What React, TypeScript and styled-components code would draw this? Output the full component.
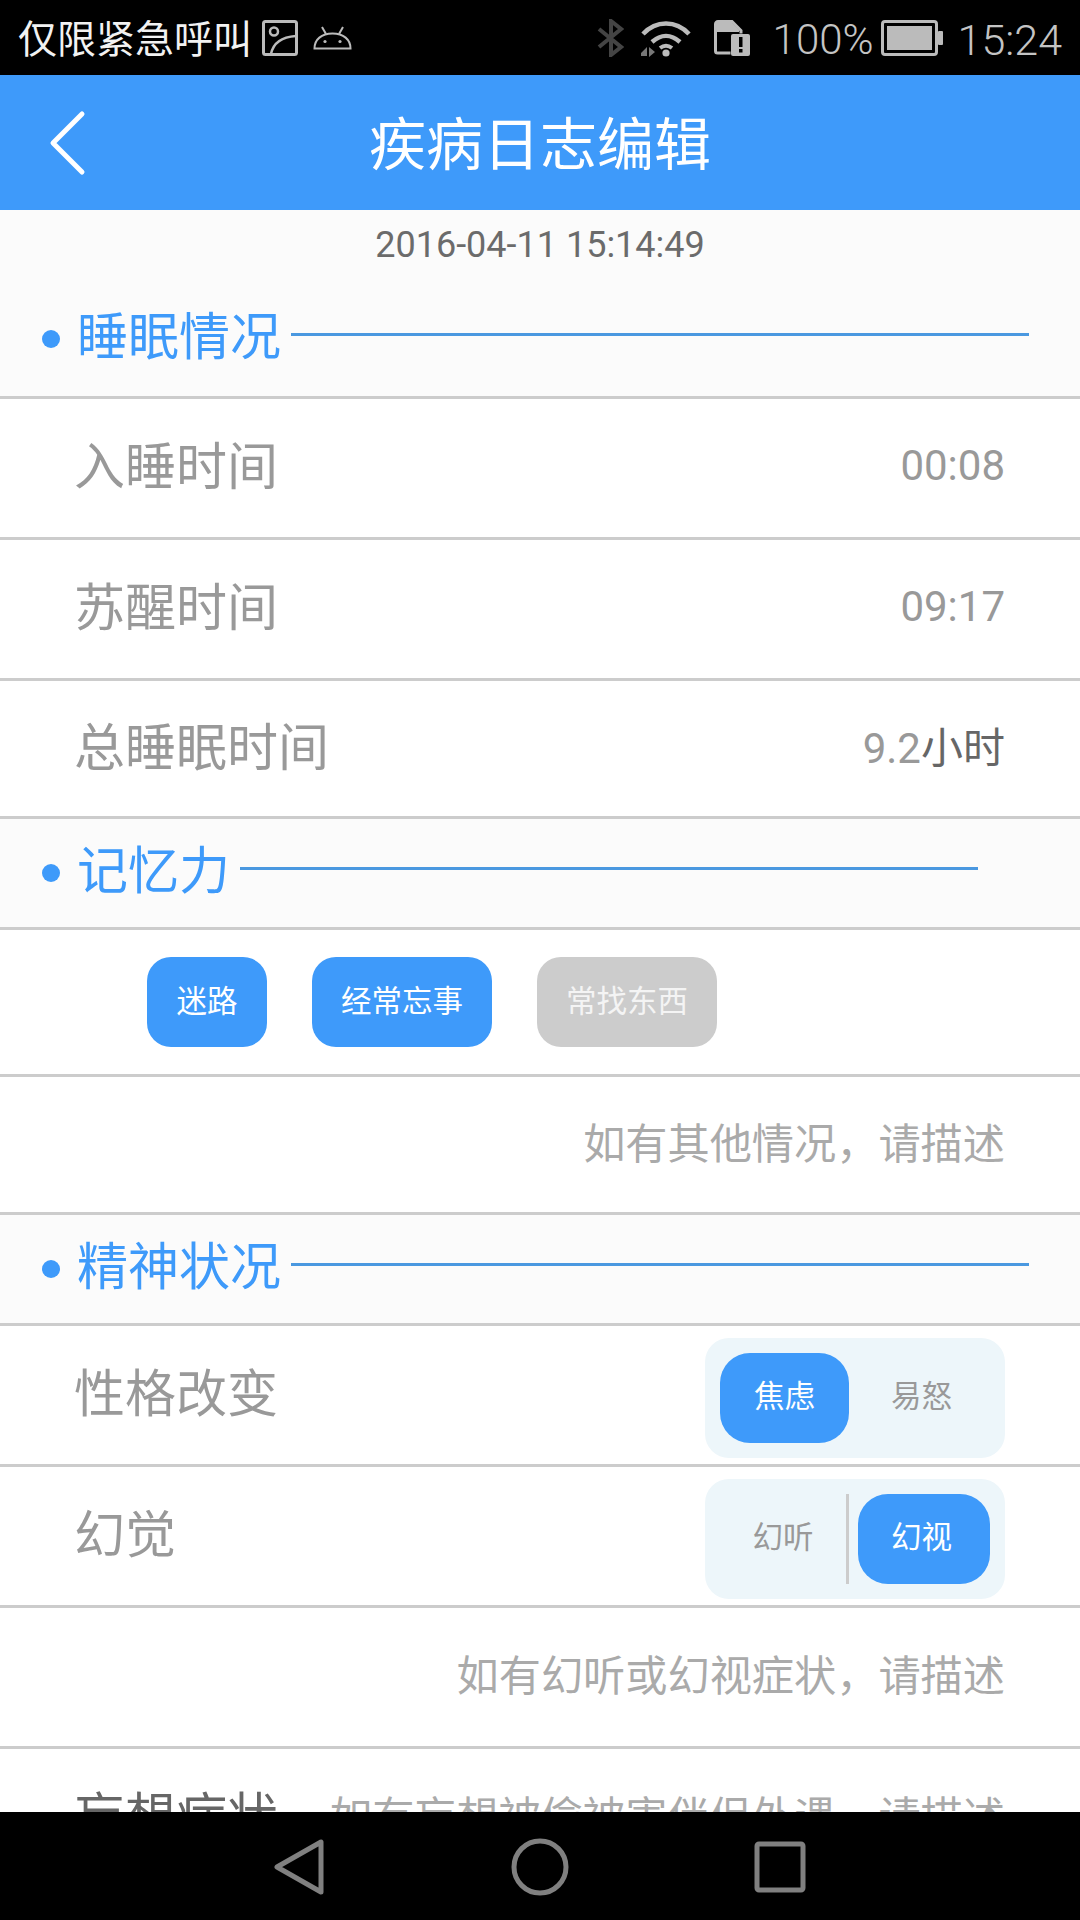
import React from 'react';
import styled, {createGlobalStyle} from 'styled-components';

const BLUE = '#3e9afa';
const LINE = '#cccccc';

const GlobalStyle = createGlobalStyle`
	html, body {
		margin: 0;
		padding: 0;
		background: #000;
	}
	* {
		box-sizing: border-box;
	}
`;

const Page = styled.div`
	width: 1080px;
	height: 1920px;
	display: flex;
	flex-direction: column;
	overflow: hidden;
	background: #fff;
	font-family: Roboto, 'Noto Sans CJK SC', sans-serif;
`;

const StatusBar = styled.div`
	height: 75px;
	flex: none;
	background: #000;
	color: #bbb;
	display: flex;
	align-items: center;
	justify-content: space-between;
	padding: 0 18px;
`;

const StatusGroup = styled.div`
	display: flex;
	align-items: center;
`;

const Carrier = styled.span`
	margin-top: 4px;
	font-size: 39px;
	line-height: 44px;
	font-weight: 400;
	color: #f2f2f2;
	white-space: nowrap;
`;

const StatusText = styled.span<{$left: number; $size?: number}>`
	margin: 4px 0 0 ${props => props.$left}px;
	font-size: ${props => props.$size ?? 42}px;
	line-height: 48px;
	font-weight: 300;
	color: #c4c4c4;
`;

const StatusIcon = styled.svg<{$left: number}>`
	display: block;
	flex: none;
	margin-left: ${props => props.$left}px;
`;

const Header = styled.div`
	height: 135px;
	flex: none;
	background: ${BLUE};
	display: flex;
	align-items: center;
	justify-content: center;
	position: relative;
`;

const BackButton = styled.svg`
	position: absolute;
	left: 49px;
	top: 35px;
`;

const Title = styled.h1`
	margin: 6px 0 0 0;
	font-size: 57px;
	line-height: 70px;
	font-weight: 400;
	color: #fff;
`;

const Content = styled.div`
	flex: 1;
	min-height: 0;
	overflow: hidden;
`;

const DateLine = styled.div`
	height: 75px;
	padding-top: 11px;
	background: #fbfbfb;
	text-align: center;
	font-size: 36px;
	line-height: 48px;
	color: #6b6b6b;
`;

const SectionHead = styled.div<{$height?: number}>`
	height: ${props => props.$height ?? 111}px;
	padding: 19px 0 0 42px;
	background: #fbfbfb;
	border-bottom: 3px solid ${LINE};
	display: flex;
	align-items: flex-start;
`;

const SectionInner = styled.div`
	display: flex;
	align-items: center;
	height: 60px;
`;

const Dot = styled.span`
	width: 18px;
	height: 18px;
	margin-top: 10px;
	border-radius: 50%;
	background: ${BLUE};
`;

const SectionTitle = styled.span`
	margin: 7px 0 0 17px;
	font-size: 51px;
	line-height: 60px;
	color: ${BLUE};
`;

const SectionRule = styled.span`
	width: 738px;
	height: 3px;
	margin-left: 10px;
	background: #4a98e0;
`;

const Row = styled.div<{$height?: number}>`
	height: ${props => props.$height ?? 141}px;
	padding: 0 75px 0 74px;
	border-bottom: 3px solid ${LINE};
	display: flex;
	align-items: center;
	justify-content: space-between;
`;

const Label = styled.span<{$dark?: boolean}>`
	font-size: 51px;
	line-height: 60px;
	color: ${props => (props.$dark ? '#666' : '#999')};
`;

const Value = styled.span`
	font-size: 42px;
	line-height: 60px;
	color: #999;
`;

const TimeValue = styled(Value)`
	margin-bottom: 5px;
`;

const Unit = styled.span`
	color: #666;
`;

const Hint = styled.span`
	margin-left: auto;
	font-size: 42.2px;
	line-height: 60px;
	color: #aaa;
`;

const TagRow = styled.div`
	height: 147px;
	padding: 27px 0 0 147px;
	border-bottom: 3px solid ${LINE};
	display: flex;
	align-items: flex-start;
	gap: 45px;
`;

const Tag = styled.span<{$off?: boolean; $width: number}>`
	width: ${props => props.$width}px;
	height: 90px;
	border-radius: 24px;
	background: ${props => (props.$off ? LINE : BLUE)};
	color: ${props => (props.$off ? '#f4f4f4' : '#fff')};
	font-size: 30.5px;
	line-height: 89px;
	text-align: center;
`;

const Segment = styled.div`
	width: 300px;
	height: 120px;
	margin: 6px 0 0 0;
	padding: 15px;
	border-radius: 24px;
	background: #edf6fa;
	display: flex;
	align-items: stretch;
	gap: 9px;
`;

const SegmentItem = styled.span<{$on?: boolean; $split?: boolean; $width: number}>`
	width: ${props => props.$width}px;
	border-radius: ${props => (props.$on ? '30px' : '0')};
	background: ${props => (props.$on ? BLUE : 'transparent')};
	border-right: ${props => (props.$split ? `3px solid ${LINE}` : '0')};
	color: ${props => (props.$on ? '#fff' : '#999')};
	font-size: 30.5px;
	line-height: 88px;
	text-align: center;

	&:last-child {
		padding-right: 5px;
	}
`;

const NavBar = styled.div`
	height: 108px;
	flex: none;
	padding-top: 2px;
	background: #000;
	display: flex;
	align-items: center;
	justify-content: center;
`;

const NavCell = styled.div`
	width: 240px;
	display: flex;
	justify-content: center;
`;

const App = () => (
	<Page>
		<GlobalStyle />
		<StatusBar>
			<StatusGroup>
				<Carrier>仅限紧急呼叫</Carrier>
				<StatusIcon $left={10} width="36" height="36" viewBox="0 0 36 36" fill="none" stroke="#bbb" strokeWidth="3">
					<rect x="1.5" y="1.5" width="33" height="33" rx="2" />
					<circle cx="12" cy="11.5" r="4" strokeWidth="2.5" />
					<path d="M9 34c2-10 10-17 25-18" strokeWidth="2.5" />
				</StatusIcon>
				<StatusIcon $left={15} width="39" height="24" viewBox="0 0 39 24" fill="none" stroke="#bbb" strokeWidth="2">
					<path d="M1.5 22.5h36c0-9-7-15-18-15s-18 6-18 15z" />
					<path d="M9 1l4 7M30 1l-4 7" />
					<circle cx="12" cy="15.5" r="1.6" fill="#bbb" stroke="none" />
					<circle cx="27" cy="15.5" r="1.6" fill="#bbb" stroke="none" />
				</StatusIcon>
			</StatusGroup>
			<StatusGroup>
				<StatusIcon $left={0} width="27" height="38" viewBox="0 0 27 38" fill="none" stroke="#444" strokeWidth="4">
					<path d="M2 10l22 18-10 8V2l10 8L2 28" />
				</StatusIcon>
				<StatusIcon $left={17} width="50" height="38" viewBox="0 0 50 38" fill="none" stroke="#bbb" strokeWidth="4.5">
					<path d="M2 15C15 1 35 1 48 15" />
					<path d="M11 23c9-8 19-8 28 0" />
					<path d="M19 29c4-3 8-3 12 0" strokeWidth="4" />
					<circle cx="25" cy="34" r="3.6" fill="#bbb" stroke="none" />
					<path d="M0 34l6-6v9H0zM8 28l6 5-6 5z" fill="#777" stroke="none" />
				</StatusIcon>
				<StatusIcon $left={23} width="36" height="36" viewBox="0 0 36 36" fill="none">
					<path d="M1.500 4a2.500 2.500 0 0 1 2.500-2.500h14l9 9v3M1.500 4v27a2 2 0 0 0 2 2h13" stroke="#bbb" strokeWidth="3" />
					<path d="M2 2h15l8 8v2H2z" fill="#bbb" />
					<rect x="17" y="14" width="19" height="22" rx="2" fill="#bbb" />
					<rect x="25" y="17" width="3.500" height="10" fill="#000" />
					<rect x="25" y="29" width="3.500" height="3.500" fill="#000" />
				</StatusIcon>
				<StatusText $left={23}>100%</StatusText>
				<StatusIcon $left={7} width="62" height="36" viewBox="0 0 62 36" fill="none">
					<rect x="1.500" y="1.500" width="54" height="33" rx="2.500" stroke="#bbb" strokeWidth="3" />
					<rect x="6" y="6" width="45" height="24" fill="#bbb" />
					<rect x="57" y="11" width="5" height="14" rx="1" fill="#bbb" />
				</StatusIcon>
				<StatusText $left={15} $size={43}>
					15:24
				</StatusText>
			</StatusGroup>
		</StatusBar>
		<Header>
			<BackButton width="38" height="66" viewBox="0 0 38 66" fill="none" stroke="#fff" strokeWidth="5" strokeLinecap="round" strokeLinejoin="round">
				<path d="M33 4L4 33l29 29" />
			</BackButton>
			<Title>疾病日志编辑</Title>
		</Header>
		<Content>
			<DateLine>2016-04-11 15:14:49</DateLine>
			<SectionHead $height={114}>
				<SectionInner>
					<Dot />
					<SectionTitle>睡眠情况</SectionTitle>
					<SectionRule />
				</SectionInner>
			</SectionHead>
			<Row>
				<Label>入睡时间</Label>
				<TimeValue>00:08</TimeValue>
			</Row>
			<Row>
				<Label>苏醒时间</Label>
				<TimeValue>09:17</TimeValue>
			</Row>
			<Row $height={138}>
				<Label>总睡眠时间</Label>
				<Value>
					9.2<Unit>小时</Unit>
				</Value>
			</Row>
			<SectionHead>
				<SectionInner>
					<Dot />
					<SectionTitle>记忆力</SectionTitle>
					<SectionRule />
				</SectionInner>
			</SectionHead>
			<TagRow>
				<Tag $width={120}>迷路</Tag>
				<Tag $width={180}>经常忘事</Tag>
				<Tag $width={180} $off>
					常找东西
				</Tag>
			</TagRow>
			<Row $height={138}>
				<Hint>如有其他情况，请描述</Hint>
			</Row>
			<SectionHead>
				<SectionInner>
					<Dot />
					<SectionTitle>精神状况</SectionTitle>
					<SectionRule />
				</SectionInner>
			</SectionHead>
			<Row>
				<Label>性格改变</Label>
				<Segment>
					<SegmentItem $width={129} $on>
						焦虑
					</SegmentItem>
					<SegmentItem $width={132}>易怒</SegmentItem>
				</Segment>
			</Row>
			<Row>
				<Label>幻觉</Label>
				<Segment>
					<SegmentItem $width={129} $split>
						幻听
					</SegmentItem>
					<SegmentItem $width={132} $on>
						幻视
					</SegmentItem>
				</Segment>
			</Row>
			<Row>
				<Hint>如有幻听或幻视症状，请描述</Hint>
			</Row>
			<Row>
				<Label $dark>妄想症状</Label>
				<Hint>如有妄想被偷被害伴侣外遇，请描述</Hint>
			</Row>
		</Content>
		<NavBar>
			<NavCell>
				<svg width="52" height="58" viewBox="0 0 52 58" fill="none" stroke="#808080" strokeWidth="5" strokeLinejoin="round">
					<path d="M47 4v50L3 29z" />
				</svg>
			</NavCell>
			<NavCell>
				<svg width="58" height="58" viewBox="0 0 58 58" fill="none" stroke="#808080" strokeWidth="5">
					<circle cx="29" cy="29" r="26" />
				</svg>
			</NavCell>
			<NavCell>
				<svg width="52" height="52" viewBox="0 0 52 52" fill="none" stroke="#808080" strokeWidth="5" strokeLinejoin="round">
					<rect x="3" y="3" width="46" height="46" rx="2" />
				</svg>
			</NavCell>
		</NavBar>
	</Page>
);

export default App;
